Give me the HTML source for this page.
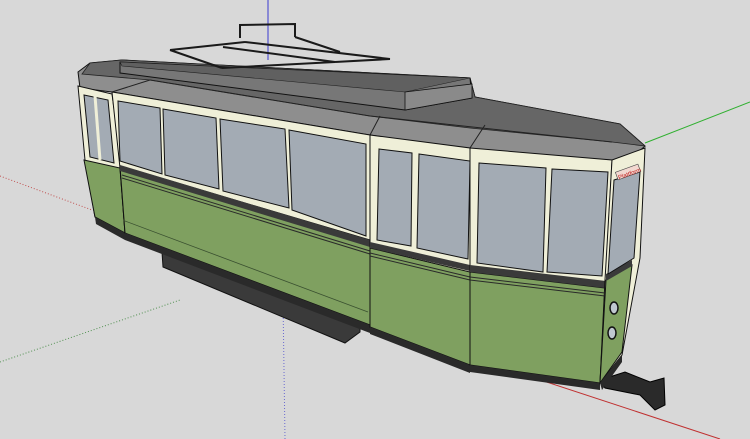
<!DOCTYPE html>
<html><head><meta charset="utf-8"><style>
html,body{margin:0;padding:0;background:#d8d8d8;}
svg{display:block;}
</style></head><body>
<svg width="750" height="439" viewBox="0 0 750 439" xmlns="http://www.w3.org/2000/svg">
<rect width="750" height="439" fill="#d8d8d8"/>
<line x1="268" y1="0" x2="268" y2="60" stroke="#3a3ad0" stroke-width="1"/>
<line x1="283" y1="300" x2="285" y2="439" stroke="#6a6ad0" stroke-width="1" stroke-dasharray="1,2"/>
<line x1="0" y1="176" x2="92" y2="210" stroke="#c05050" stroke-width="1" stroke-dasharray="1,2"/>
<line x1="510" y1="370" x2="720" y2="439" stroke="#c03030" stroke-width="1"/>
<line x1="645" y1="143" x2="750" y2="102" stroke="#30b030" stroke-width="1"/>
<line x1="0" y1="362" x2="180" y2="300" stroke="#509050" stroke-width="1" stroke-dasharray="1,2"/>
<polygon points="162,252 360,318 360,332 345,343 163,267" fill="#3a3a3a" stroke="#111" stroke-width="1"/>
<polygon points="600,380 625,372 650,382 664,378 665,405 655,410 640,395 605,388" fill="#2a2a2a" stroke="#000" stroke-width="1"/>
<!-- roof -->
<polygon points="78,72 90,63 122,60 470,78 475,97 620,124 645,146 632,158 612,162 470,150 370,135 112,92 80,88" fill="#8e8e8e" stroke="#111" stroke-width="1"/>
<polygon points="90,63 122,60 470,78 475,97 620,124 645,146 612,142 470,128 370,116 150,80 82,74" fill="#666" stroke="#222" stroke-width="0.8"/>
<polygon points="120,62 470,78 472,98 405,110 120,73" fill="#777" stroke="#111" stroke-width="1"/>
<polygon points="120,62 470,78 405,92 122,66" fill="#606060" stroke="#222" stroke-width="0.6"/>
<polygon points="405,92 472,84 472,98 405,110" fill="#8a8a8a" stroke="#111" stroke-width="0.8"/>
<line x1="150" y1="80" x2="370" y2="116" stroke="#222" stroke-width="1"/>
<line x1="370" y1="116" x2="612" y2="142" stroke="#222" stroke-width="1"/>
<line x1="112" y1="92" x2="150" y2="80" stroke="#222" stroke-width="1"/>
<line x1="370" y1="135" x2="380" y2="116" stroke="#222" stroke-width="1"/>
<line x1="470" y1="148" x2="485" y2="125" stroke="#222" stroke-width="1"/>
<g stroke="#1a1a1a" stroke-width="2" fill="none">
<polyline points="240,38 240,25 295,24 295,37"/>
<line x1="170" y1="50" x2="245" y2="42"/>
<line x1="245" y1="42" x2="390" y2="59"/>
<line x1="170" y1="50" x2="222" y2="68"/>
<line x1="222" y1="68" x2="335" y2="62"/>
<line x1="223" y1="47" x2="335" y2="62"/>
<line x1="335" y1="62" x2="390" y2="59"/>
<line x1="295" y1="37" x2="340" y2="52"/>
</g>
<polygon points="78,86 112,94 122,168 125,233 95,217 85,160" fill="#efefd8" stroke="#111" stroke-width="1"/>
<polygon points="84,160 120,168 125,233 95,217" fill="#7fa060" stroke="#111" stroke-width="1"/>
<polygon points="84,95 108,100 114,163 90,157" fill="#a3abb4" stroke="#111" stroke-width="1"/>
<line x1="95" y1="96" x2="100" y2="160" stroke="#efefd8" stroke-width="3"/>
<polygon points="95,217 125,233 125,240 96,224" fill="#2a2a2a"/>
<polygon points="112,92 370,135 370,325 125,233 120,168" fill="#efefd8" stroke="#111" stroke-width="1"/>
<polygon points="120,166 370,240 370,325 125,233" fill="#7fa060" stroke="#111" stroke-width="1"/>
<polygon points="120,165 370,240 370,247 120,171" fill="#3a3a3a"/>
<line x1="122" y1="175" x2="370" y2="251" stroke="#2a2a2a" stroke-width="1"/>
<line x1="122" y1="178" x2="370" y2="254" stroke="#2a2a2a" stroke-width="1"/>
<line x1="125" y1="221" x2="368" y2="312" stroke="#3a5030" stroke-width="0.8"/>
<polygon points="125,233 370,325 370,333 125,240" fill="#2a2a2a"/>
<g fill="#a3abb4" stroke="#111" stroke-width="1">
<polygon points="118,101 160,108 162,174 120,161"/>
<polygon points="163,109 216,118 219,189 165,175"/>
<polygon points="220,119 285,129 289,208 223,191"/>
<polygon points="289,130 366,144 366,236 292,210"/>
</g>
<polygon points="370,135 470,148 470,365 370,327" fill="#efefd8" stroke="#111" stroke-width="1"/>
<polygon points="370,248 470,272 470,365 370,327" fill="#7fa060" stroke="#111" stroke-width="1"/>
<polygon points="370,242 470,265 470,271 370,248" fill="#3a3a3a"/>
<line x1="370" y1="253" x2="470" y2="277" stroke="#2a2a2a" stroke-width="1"/>
<line x1="370" y1="256" x2="470" y2="280" stroke="#2a2a2a" stroke-width="1"/>
<polygon points="370,327 470,365 470,373 370,334" fill="#2a2a2a"/>
<g fill="#a3abb4" stroke="#111" stroke-width="1">
<polygon points="379,149 412,153 411,246 377,240"/>
<polygon points="419,154 470,161 468,259 417,248"/>
</g>
<polygon points="470,148 612,160 600,383 470,365" fill="#efefd8" stroke="#111" stroke-width="1"/>
<polygon points="470,272 605,288 600,383 470,365" fill="#7fa060" stroke="#111" stroke-width="1"/>
<polygon points="470,265 606,281 605,288 470,272" fill="#3a3a3a"/>
<line x1="470" y1="277" x2="605" y2="293" stroke="#2a2a2a" stroke-width="1"/>
<line x1="470" y1="280" x2="605" y2="296" stroke="#2a2a2a" stroke-width="1"/>
<polygon points="470,365 600,383 600,390 470,372" fill="#2a2a2a"/>
<g fill="#a3abb4" stroke="#111" stroke-width="1">
<polygon points="479,163 546,168 543,272 477,263"/>
<polygon points="552,169 608,172 602,276 547,272"/>
</g>
<polygon points="612,160 645,148 640,258 622,355 600,383 605,280" fill="#efefd8" stroke="#111" stroke-width="1"/>
<polygon points="606,280 632,265 622,352 600,383" fill="#7fa060" stroke="#111" stroke-width="1"/>
<polygon points="606,274 632,260 632,266 606,281" fill="#3a3a3a"/>
<polygon points="614,180 640,172 634,258 608,274" fill="#a3abb4" stroke="#111" stroke-width="1"/>
<rect x="616" y="168" width="24" height="8" fill="#f2d8d0" stroke="#444" stroke-width="0.6" transform="rotate(-20 628 172)"/>
<text x="617" y="176" font-family="Liberation Sans, sans-serif" font-size="6" fill="#c02020" transform="rotate(-20 628 172)">Plattform</text>
<ellipse cx="614" cy="308" rx="4" ry="6" fill="#c0c8d0" stroke="#111" stroke-width="1.5"/>
<ellipse cx="612" cy="333" rx="4" ry="6" fill="#c0c8d0" stroke="#111" stroke-width="1.5"/>
<polygon points="600,383 622,355 622,362 602,390" fill="#2a2a2a"/>
</svg>
</body></html>
